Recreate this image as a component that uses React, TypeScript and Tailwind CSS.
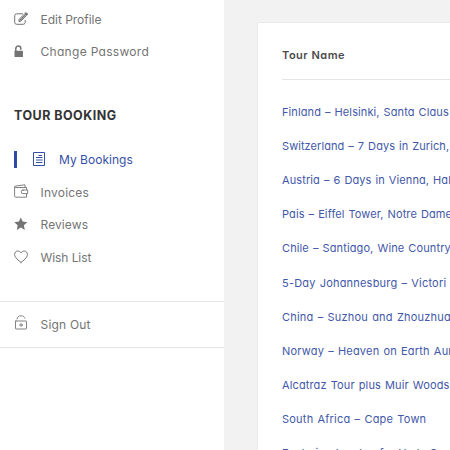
import type { ReactNode } from "react";

const font =
  "font-['Inter','Open_Sans',sans-serif] [font-feature-settings:'cv11','liga'_0]";

const line = {
  fill: "none",
  stroke: "currentColor",
  strokeWidth: 1,
  strokeLinecap: "round",
  strokeLinejoin: "round",
} as const;

function EditIcon() {
  return (
    <svg width="15" height="14" viewBox="0 0 15 14" {...line}>
      <path d="M8.500 1.800H2.700A2 2 0 0 0 .7 3.800v6.500a2 2 0 0 0 2 2h6.500a2 2 0 0 0 2-2V8.300" />
      <path d="M5 9.200V7.400L10.900 1.500l1.800 1.800L6.800 9.200Z" />
      <path d="M6 8.200 11.800 2.400" strokeWidth="1.300" />
      <path d="m11.500 1 .6-.5 1.600 1.600-.5.600Z" fill="currentColor" />
    </svg>
  );
}

function UnlockIcon() {
  return (
    <svg width="15" height="14" viewBox="0 0 15 14" {...line}>
      <path d="M1.800 6.500V3.500a2.500 2.500 0 0 1 5 0v.8" strokeWidth="1.500" />
      <rect x=".5" y="5.800" width="8.500" height="6.200" rx=".5" fill="currentColor" stroke="none" />
    </svg>
  );
}

function DocumentIcon() {
  return (
    <svg width="13" height="15" viewBox="0 0 13 15" {...line} strokeLinecap="butt">
      <rect x=".5" y=".5" width="11" height="13" />
      <path d="M5.500 3.500H9M3 5.500h6.500M3 8h6.500M3 10.500h6.500" />
    </svg>
  );
}

function WalletIcon() {
  return (
    <svg width="15" height="15" viewBox="0 0 15 15" {...line} strokeWidth=".9">
      <path d="M12.500 5.500V3.500H1.800c-1.500-.2-1.200-1.300 0-1.500L11 .8v2.700M.6 2.800v9.400c0 .6.400 1 1 1h10.900V9.700" />
      <path d="M9 6h4.700v3.600H9a1.800 1.800 0 0 1 0-3.600Z" />
    </svg>
  );
}

function StarIcon() {
  return (
    <svg width="15" height="14" viewBox="0 0 15 14" fill="currentColor">
      <path d="m6.800.5 1.900 4.100 4.600.6-3.400 3.100.9 4.600-4-2.300-4 2.300.9-4.600L.3 5.200l4.600-.6Z" />
    </svg>
  );
}

function HeartIcon() {
  return (
    <svg width="15" height="14" viewBox="0 0 15 14" {...line}>
      <path d="M7 12.400C4.500 10.300.6 7.700.6 4.400.6 2.400 2 1 3.800 1 5.200 1 6.400 1.800 7 3 7.600 1.800 8.800 1 10.200 1c1.800 0 3.200 1.400 3.200 3.400 0 3.300-3.900 5.900-6.400 8Z" />
    </svg>
  );
}

function SignOutIcon() {
  return (
    <svg width="15" height="16" viewBox="0 0 15 16" {...line} strokeWidth=".9">
      <rect x="1.500" y="6" width="11" height="8" rx=".4" />
      <path d="M3 4C3 2.100 4.800.8 7 .8c1.800 0 3.300 1 3.900 2.300" />
      <circle cx="7" cy="10" r="1.200" />
    </svg>
  );
}

function Item({
  icon,
  label,
  tracking,
}: {
  icon: ReactNode;
  label: string;
  tracking: string;
}) {
  return (
    <li className="flex h-[32.5px] items-center text-[#747474]">
      <span className="flex w-[26.5px] shrink-0">{icon}</span>
      <span className={tracking}>{label}</span>
    </li>
  );
}

const tours = [
  "Finland – Helsinki, Santa Claus",
  "Switzerland – 7 Days in Zurich,",
  "Austria – 6 Days in Vienna, Hal",
  "Pais – Eiffel Tower, Notre Dame",
  "Chile – Santiago, Wine Country",
  "5-Day Johannesburg – Victori",
  "China – Suzhou and Zhouzhua",
  "Norway – Heaven on Earth Aur",
  "Alcatraz Tour plus Muir Woods",
  "South Africa – Cape Town",
  "Exploring London for Hyde South",
];

const trackings = [
  "tracking-[0.1px]",
  "tracking-[0.07px]",
  "tracking-[0.1px]",
  "tracking-[0.1px]",
  "tracking-[0.12px]",
  "tracking-[0.2px]",
  "tracking-[0.22px]",
  "tracking-[0.2px]",
  "tracking-[0.13px]",
  "tracking-[0.22px]",
  "tracking-[0.1px]",
];

export default function App() {
  return (
    <div className={`flex h-[450px] w-[450px] items-start overflow-hidden bg-[#f2f2f2] ${font}`}>
      <aside className="h-full w-[224px] shrink-0 bg-white text-[12px]">
        <ul className="pt-[3px] pl-3.5">
          <Item icon={<EditIcon />} label="Edit Profile" tracking="pt-px tracking-[-0.02px]" />
          <Item icon={<UnlockIcon />} label="Change Password" tracking="pt-px tracking-[0.3px]" />
        </ul>
        <h2 className="mt-[37px] pt-px pl-3.5 text-[12.5px] leading-[20px] font-bold tracking-[0.47px] text-[#333]">
          TOUR BOOKING
        </h2>
        <ul className="mt-[17px] pl-3.5">
          <li className="flex h-[32.5px] items-center text-[#3550a8]">
            <span className="mr-4 h-[17px] w-[2.5px] bg-[#2f49a5]" />
            <span className="mr-[13.5px]"><DocumentIcon /></span>
            <span className="pt-[2px] tracking-[0.03px]">My Bookings</span>
          </li>
          <Item icon={<WalletIcon />} label="Invoices" tracking="pt-[2px] tracking-[0.2px]" />
          <Item icon={<StarIcon />} label="Reviews" tracking="pt-[2px] tracking-[0.1px]" />
          <Item icon={<HeartIcon />} label="Wish List" tracking="pt-[2px] tracking-[-0.08px]" />
        </ul>
        <ul className="mt-[28px] flex h-[47px] flex-col justify-center border-y border-[#e5e5e5] pl-3.5">
          <Item
            icon={<span className="pb-[3px]"><SignOutIcon /></span>}
            label="Sign Out"
            tracking="tracking-[0.2px]"
          />
        </ul>
      </aside>
      <main className="mt-[22px] ml-[33px] w-[260px] shrink-0 border border-[#e9e9e9] bg-white pl-[24px]">
        <h3 className="flex h-[57px] items-center border-b border-[#e5e5e5] pt-[8px] text-[11px] font-semibold tracking-[0.5px] text-[#4b4b4b]">
          Tour Name
        </h3>
        <ul className="pt-[15px] text-[11px] whitespace-nowrap text-[#4258a8] [word-spacing:0.8px]">
          {tours.map((tour, index) => (
            <li key={tour} className="flex h-[34.15px] items-center">
              <span className={trackings[index]}>{tour}</span>
            </li>
          ))}
        </ul>
      </main>
    </div>
  );
}
